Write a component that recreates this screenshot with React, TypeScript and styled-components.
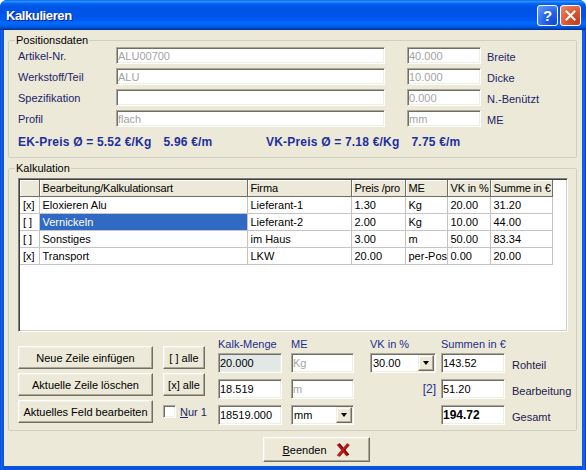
import { Fragment } from "react";
import styled, { createGlobalStyle } from "styled-components";

const FONT = `"Liberation Sans", Arial, sans-serif`;

const GlobalStyle = createGlobalStyle`
  html, body {
    margin: 0;
    padding: 0;
    background: #fff;
  }
  body {
    font-family: ${FONT};
    font-size: 11px;
  }
`;

interface PosRow {
  label: string;
  main: string;
  mainMuted: boolean;
  side: string;
  sideLabel: string;
}

const positions: PosRow[] = [
  { label: "Artikel-Nr.", main: "ALU00700", mainMuted: true, side: "40.000", sideLabel: "Breite" },
  { label: "Werkstoff/Teil", main: "ALU", mainMuted: true, side: "10.000", sideLabel: "Dicke" },
  { label: "Spezifikation", main: "", mainMuted: false, side: "0.000", sideLabel: "N.-Benützt" },
  { label: "Profil", main: "flach", mainMuted: true, side: "mm", sideLabel: "ME" },
];

interface CalcRow {
  mark: string;
  art: string;
  firma: string;
  preis: string;
  me: string;
  vk: string;
  summe: string;
  selected?: boolean;
}

const rows: CalcRow[] = [
  { mark: "[x]", art: "Eloxieren Alu", firma: "Lieferant-1", preis: "1.30", me: "Kg", vk: "20.00", summe: "31.20" },
  { mark: "[ ]", art: "Vernickeln", firma: "Lieferant-2", preis: "2.00", me: "Kg", vk: "10.00", summe: "44.00", selected: true },
  { mark: "[ ]", art: "Sonstiges", firma: "im Haus", preis: "3.00", me: "m", vk: "50.00", summe: "83.34" },
  { mark: "[x]", art: "Transport", firma: "LKW", preis: "20.00", me: "per-Pos", vk: "0.00", summe: "20.00" },
];

const columns = [
  { title: "", width: 19 },
  { title: "Bearbeitung/Kalkulationsart", width: 208 },
  { title: "Firma", width: 104 },
  { title: "Preis /pro", width: 54 },
  { title: "ME", width: 42 },
  { title: "VK in %", width: 43 },
  { title: "Summe in €", width: 62 },
];

export default function App() {
  return (
    <>
      <GlobalStyle />
      <Window>
        <TitleBar>
          <Title>Kalkulieren</Title>
          <CaptionButton $variant="help">?</CaptionButton>
          <CaptionButton $variant="close">
            <svg width="11" height="11" viewBox="0 0 11 11">
              <path d="M1.5 1.5 L9.5 9.5 M9.5 1.5 L1.5 9.5" stroke="#fff" strokeWidth="2" strokeLinecap="square" />
            </svg>
          </CaptionButton>
        </TitleBar>

        <Client>
          <Group>
            <Legend>Positionsdaten</Legend>
            <PosGrid>
              {positions.map((p) => (
                <Fragment key={p.label}>
                  <FieldLabel>{p.label}</FieldLabel>
                  <Field $w={269} $muted={p.mainMuted} readOnly value={p.main} />
                  <Field $w={74} $muted readOnly value={p.side} />
                  <SideLabel>{p.sideLabel}</SideLabel>
                </Fragment>
              ))}
            </PosGrid>
            <PriceRow>
              <PricePair>
                <span>EK-Preis Ø = 5.52 €/Kg</span>
                <span>5.96 €/m</span>
              </PricePair>
              <PricePair>
                <span>VK-Preis Ø = 7.18 €/Kg</span>
                <span>7.75 €/m</span>
              </PricePair>
            </PriceRow>
          </Group>

          <Group $gap $pb={5}>
            <Legend>Kalkulation</Legend>
            <GridFrame>
              <CalcTable>
                <colgroup>
                  {columns.map((c, i) => (
                    <col key={i} style={{ width: c.width }} />
                  ))}
                </colgroup>
                <thead>
                  <tr>
                    {columns.map((c, i) => (
                      <HeadCell key={i}>{c.title}</HeadCell>
                    ))}
                  </tr>
                </thead>
                <tbody>
                  {rows.map((r) => (
                    <tr key={r.art}>
                      <Cell>{r.mark}</Cell>
                      <Cell $selected={r.selected}>{r.art}</Cell>
                      <Cell>{r.firma}</Cell>
                      <Cell>{r.preis}</Cell>
                      <Cell>{r.me}</Cell>
                      <Cell>{r.vk}</Cell>
                      <Cell>{r.summe}</Cell>
                    </tr>
                  ))}
                </tbody>
              </CalcTable>
            </GridFrame>

            <Controls>
              <ButtonColumn>
                <Button $w={135}>Neue Zeile einfügen</Button>
                <Button $w={135}>Aktuelle Zeile löschen</Button>
                <Button $w={135}>Aktuelles Feld bearbeiten</Button>
              </ButtonColumn>

              <ButtonColumn $ml={10}>
                <Button $w={42}>[ ] alle</Button>
                <Button $w={42}>[x] alle</Button>
                <CheckRow>
                  <CheckBox />
                  <span>
                    <u>N</u>ur 1
                  </span>
                </CheckRow>
              </ButtonColumn>

              <FieldColumn $ml={13}>
                <ColumnTitle>Kalk-Menge</ColumnTitle>
                <Field $w={64} $h={20} $tint="#e1e8e7" readOnly value="20.000" />
                <Field $w={64} $h={20} readOnly value="18.519" />
                <Field $w={64} $h={20} readOnly value="18519.000" />
              </FieldColumn>

              <FieldColumn $ml={9}>
                <ColumnTitle>ME</ColumnTitle>
                <Field $w={63} $h={20} $muted readOnly value="Kg" />
                <Field $w={63} $h={20} $muted readOnly value="m" />
                <Combo $w={63}>
                  <ComboText>mm</ComboText>
                  <ComboButton />
                </Combo>
              </FieldColumn>

              <FieldColumn $ml={16} $w={69}>
                <ColumnTitle>VK in %</ColumnTitle>
                <Combo $w={66}>
                  <ComboText>30.00</ComboText>
                  <ComboButton />
                </Combo>
                <Counter>[2]</Counter>
              </FieldColumn>

              <FieldColumn $ml={5}>
                <ColumnTitle>Summen in €</ColumnTitle>
                <SumRow>
                  <Field $w={64} $h={20} readOnly value="143.52" />
                  <SumLabel>Rohteil</SumLabel>
                </SumRow>
                <SumRow>
                  <Field $w={64} $h={20} readOnly value="51.20" />
                  <SumLabel>Bearbeitung</SumLabel>
                </SumRow>
                <SumRow>
                  <Field $w={64} $h={20} $bold readOnly value="194.72" />
                  <SumLabel>Gesamt</SumLabel>
                </SumRow>
              </FieldColumn>
            </Controls>
          </Group>

          <Footer>
            <Button $w={107} $h={25}>
              <u>B</u>eenden
              <svg width="16" height="16" viewBox="0 0 16 16" style={{ marginLeft: 8 }}>
                <path d="M1.6 2.8 L4.6 1.2 L14.2 12.4 L11.6 14.6 Z" fill="#b81414" />
                <path d="M12.2 1.2 L14.8 3.0 L4.8 14.8 L1.8 13.4 Z" fill="#a81010" />
                <path d="M4.6 1.2 L14.2 12.4 L13.2 13.3 L3.8 2.3 Z" fill="#6a0606" />
                <path d="M12.2 1.2 L13.4 2.0 L3.6 14.3 L1.8 13.4 Z" fill="#d42828" opacity="0.7" />
              </svg>
            </Button>
          </Footer>
        </Client>
      </Window>
    </>
  );
}

const Window = styled.div`
  width: 586px;
  height: 470px;
  box-sizing: border-box;
  display: flex;
  flex-direction: column;
  border-radius: 7px 7px 0 0;
  overflow: hidden;
  background: linear-gradient(to right, #0831d9 0, #166aee 1px, #0855dd 3px, #0855dd 582px, #166aee 584px, #0831d9 586px);
`;

const TitleBar = styled.div`
  flex: none;
  height: 30px;
  box-sizing: border-box;
  display: flex;
  align-items: center;
  padding: 0 5px 0 6px;
  background: linear-gradient(
    to bottom,
    #0058ee 0%,
    #3593ff 4%,
    #288eff 6%,
    #127dff 8%,
    #036ffc 10%,
    #0262ee 14%,
    #0057e5 20%,
    #0054e3 24%,
    #0055eb 56%,
    #005bf5 66%,
    #026afe 76%,
    #0062ef 86%,
    #0052d6 92%,
    #0040ab 96%,
    #003092 100%
  );
`;

const Title = styled.span`
  flex: 1;
  color: #fff;
  font: bold 13px ${FONT};
  letter-spacing: -0.4px;
  text-shadow: 1px 1px #0b1f86;
`;

const CaptionButton = styled.div<{ $variant: "help" | "close" }>`
  width: 21px;
  height: 21px;
  box-sizing: border-box;
  border: 1px solid #fff;
  border-radius: 3px;
  display: flex;
  align-items: center;
  justify-content: center;
  color: #fff;
  font: bold 15px ${FONT};
  background: ${(p) =>
    p.$variant === "close"
      ? "radial-gradient(circle at 85% 85%, #c3401c 0%, #d9552f 45%, #eb8c6d 100%)"
      : "radial-gradient(circle at 85% 85%, #1349d6 0%, #2566ea 45%, #6b9ff8 100%)"};
  & + & {
    margin-left: 2px;
  }
`;

const Client = styled.div`
  flex: 1;
  margin: 0 4px 4px;
  padding: 4px 5px 0 4px;
  display: flex;
  flex-direction: column;
  background: #ece9d8;
  color: #000;
`;

const Group = styled.fieldset<{ $gap?: boolean; $pb?: number }>`
  margin: ${(p) => (p.$gap ? "4px" : "0")} 0 0;
  padding: 0 8px ${(p) => p.$pb ?? 8}px 9px;
  min-width: 0;
  border: 1px solid #d0d0bf;
  border-radius: 2px;
`;

const Legend = styled.legend`
  margin-left: -3px;
  padding: 0 1px;
  font: 11px ${FONT};
  line-height: 13px;
  color: #000;
`;

const PosGrid = styled.div`
  display: grid;
  grid-template-columns: 98px 291px 80px auto;
  grid-auto-rows: 17px;
  row-gap: 4px;
  align-items: center;
`;

const FieldLabel = styled.span`
  color: #1b2468;
`;

const SideLabel = styled.span`
  color: #1b2468;
  padding-top: 3px;
`;

const Field = styled.input<{ $w: number; $h?: number; $muted?: boolean; $tint?: string; $bold?: boolean }>`
  box-sizing: border-box;
  width: ${(p) => p.$w}px;
  height: ${(p) => p.$h ?? 17}px;
  margin: 0;
  padding: 0 0 0 1px;
  font: ${(p) => (p.$bold ? "bold 12px" : "11px")} ${FONT};
  color: ${(p) => (p.$muted ? "#a3a3a3" : "#000")};
  background: ${(p) => p.$tint ?? "#fff"};
  border: 1px solid;
  border-color: #aca899 #fff #fff #aca899;
  box-shadow: inset 1px 1px #716f64, inset -1px -1px #f1efe2;
  outline: none;
`;

const PriceRow = styled.div`
  display: grid;
  grid-template-columns: 248px auto;
  margin-top: 8px;
  height: 14px;
  align-items: center;
  color: #1d2f9f;
  font: bold 12px ${FONT};
  letter-spacing: 0.2px;
`;

const PricePair = styled.div`
  display: flex;
  gap: 12px;
  white-space: nowrap;
`;

const GridFrame = styled.div`
  box-sizing: border-box;
  height: 154px;
  margin-top: 3px;
  padding: 0;
  background: #fff;
  border: 1px solid;
  border-color: #808080 #fff #fff #808080;
  box-shadow: inset 1px 1px #404040, inset -1px -1px #d4d0c8;
  overflow: hidden;
`;

const CalcTable = styled.table`
  margin: 1px 0 0 1px;
  border-collapse: collapse;
  table-layout: fixed;
  width: 532px;
  font: 11px ${FONT};
`;

const HeadCell = styled.th`
  height: 16px;
  box-sizing: border-box;
  padding: 0 1px 0 3px;
  text-align: left;
  font-weight: normal;
  letter-spacing: -0.15px;
  white-space: nowrap;
  overflow: hidden;
  background: #ece9d8;
  border-right: 1px solid #716f64;
  border-bottom: 1px solid #716f64;
  box-shadow: inset 1px 1px #fff;
`;

const Cell = styled.td<{ $selected?: boolean }>`
  height: 17px;
  box-sizing: border-box;
  padding: 0 1px 0 3px;
  white-space: nowrap;
  overflow: hidden;
  color: ${(p) => (p.$selected ? "#fff" : "#000")};
  background: ${(p) => (p.$selected ? "#316ac5" : "#fff")};
  border-right: 1px solid #c4c4c4;
  border-bottom: 1px solid #c4c4c4;
`;

const Controls = styled.div`
  display: flex;
  align-items: flex-start;
  margin-top: 6px;
`;

const ButtonColumn = styled.div<{ $ml?: number }>`
  display: flex;
  flex-direction: column;
  gap: 4px;
  padding-top: 8px;
  margin-left: ${(p) => p.$ml ?? 0}px;
`;

const Button = styled.button<{ $w: number; $h?: number }>`
  box-sizing: border-box;
  width: ${(p) => p.$w}px;
  height: ${(p) => p.$h ?? 23}px;
  margin: 0;
  padding: 0;
  display: flex;
  align-items: center;
  justify-content: center;
  white-space: nowrap;
  font: 11px ${FONT};
  color: #000;
  background: #ece9d8;
  border: 1px solid;
  border-color: #fff #716f64 #716f64 #fff;
  box-shadow: inset -1px -1px #aca899, inset 1px 1px #f1efe2;
`;

const CheckRow = styled.label`
  display: flex;
  align-items: center;
  gap: 4px;
  height: 23px;
  width: 42px;
  white-space: nowrap;
  color: #1b2468;
`;

const CheckBox = styled.span`
  flex: none;
  width: 13px;
  height: 13px;
  box-sizing: border-box;
  background: #fff;
  border: 1px solid;
  border-color: #aca899 #fff #fff #aca899;
  box-shadow: inset 1px 1px #716f64, inset -1px -1px #f1efe2;
`;

const FieldColumn = styled.div<{ $ml?: number; $w?: number }>`
  display: flex;
  flex-direction: column;
  gap: 6px;
  margin-left: ${(p) => p.$ml ?? 0}px;
  ${(p) => (p.$w ? `width: ${p.$w}px;` : "")}
`;

const ColumnTitle = styled.span`
  height: 15px;
  line-height: 13px;
  margin-bottom: -6px;
  color: #1f2d8c;
  white-space: nowrap;
`;

const Combo = styled.div<{ $w: number }>`
  box-sizing: border-box;
  width: ${(p) => p.$w}px;
  height: 20px;
  display: flex;
  padding: 1px;
  background: #fff;
  border: 1px solid;
  border-color: #aca899 #fff #fff #aca899;
  box-shadow: inset 1px 1px #716f64, inset -1px -1px #f1efe2;
`;

const ComboText = styled.span`
  flex: 1;
  padding-left: 1px;
  line-height: 16px;
`;

const ComboButton = styled.span`
  width: 16px;
  box-sizing: border-box;
  display: flex;
  align-items: center;
  justify-content: center;
  background: #ece9d8;
  border: 1px solid;
  border-color: #f1efe2 #716f64 #716f64 #f1efe2;
  box-shadow: inset -1px -1px #aca899, inset 1px 1px #fff;

  &::after {
    content: "";
    border-left: 3.5px solid transparent;
    border-right: 3.5px solid transparent;
    border-top: 4px solid #000;
  }
`;

const Counter = styled.span`
  height: 20px;
  line-height: 20px;
  text-align: right;
  color: #1f2d8c;
  font-size: 12px;
`;

const SumRow = styled.div`
  display: flex;
  align-items: center;
  gap: 7px;
`;

const SumLabel = styled.span`
  color: #1c2050;
  padding-top: 3px;
  white-space: nowrap;
`;

const Footer = styled.div`
  padding: 6px 0 0 255px;
`;
